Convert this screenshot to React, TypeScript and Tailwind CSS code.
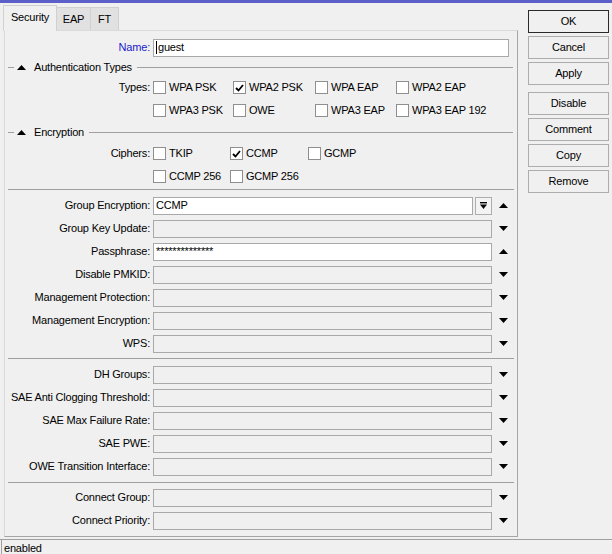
import React from 'react';

type Field = { label: string; value?: string; white?: boolean; arrow: 'up' | 'down'; drop?: boolean };

const GROUP_A: Field[] = [
  { label: 'Group Encryption:', value: 'CCMP', white: true, arrow: 'up', drop: true },
  { label: 'Group Key Update:', arrow: 'down' },
  { label: 'Passphrase:', value: '**************', white: true, arrow: 'up' },
  { label: 'Disable PMKID:', arrow: 'down' },
  { label: 'Management Protection:', arrow: 'down' },
  { label: 'Management Encryption:', arrow: 'down' },
  { label: 'WPS:', arrow: 'down' },
];

const GROUP_B: Field[] = [
  { label: 'DH Groups:', arrow: 'down' },
  { label: 'SAE Anti Clogging Threshold:', arrow: 'down' },
  { label: 'SAE Max Failure Rate:', arrow: 'down' },
  { label: 'SAE PWE:', arrow: 'down' },
  { label: 'OWE Transition Interface:', arrow: 'down' },
];

const GROUP_C: Field[] = [
  { label: 'Connect Group:', arrow: 'down' },
  { label: 'Connect Priority:', arrow: 'down' },
];

const BUTTONS = ['OK', 'Cancel', 'Apply', 'Disable', 'Comment', 'Copy', 'Remove'];

function Tri({ dir }: { dir: 'up' | 'down' }) {
  return (
    <svg width="9" height="5" viewBox="0 0 9 5" className="block">
      {dir === 'up' ? <polygon points="4.5,0 9,5 0,5" fill="#000" /> : <polygon points="0,0 9,0 4.5,5" fill="#000" />}
    </svg>
  );
}

function Check({ label, checked, w }: { label: string; checked?: boolean; w: string }) {
  return (
    <div className={`flex items-center ${w}`}>
      <div className="flex h-[13px] w-[13px] shrink-0 items-center justify-center border border-[#8f8f8f] bg-white">
        {checked && (
          <svg width="9" height="8" viewBox="0 0 9 8">
            <polyline points="1,4 3.5,6.5 8,1" fill="none" stroke="#000" strokeWidth="1.8" />
          </svg>
        )}
      </div>
      <span className="ml-[3px] whitespace-nowrap">{label}</span>
    </div>
  );
}

function Section({ title }: { title: string }) {
  return (
    <div className="flex h-[17px] items-center pl-[3px] pr-[4px]">
      <div className="h-px w-[6px] bg-[#a0a0a0]" />
      <div className="ml-[3px]">
        <Tri dir="up" />
      </div>
      <span className="ml-[8px] whitespace-nowrap">{title}</span>
      <div className="ml-[5px] h-px flex-1 bg-[#a0a0a0]" />
    </div>
  );
}

function Row({ f }: { f: Field }) {
  return (
    <div className="flex h-[23px] items-center">
      <div className="w-[145px] whitespace-nowrap text-right">{f.label}</div>
      <div className="ml-[3px] flex w-[339px] items-center">
        <div
          className={`flex h-[18px] flex-1 items-center border border-[#a9a9a9] pl-[2px] ${f.white ? 'bg-white' : 'bg-[#f0f0f0]'}`}
        >
          {f.value}
        </div>
        {f.drop && (
          <div className="ml-[2px] flex h-[18px] w-[17px] items-center justify-center border border-[#adadad] bg-[#f3f3f3]">
            <svg width="7" height="7" viewBox="0 0 7 7">
              <rect x="0" y="0" width="7" height="1.4" fill="#000" />
              <polygon points="0,2.5 7,2.5 3.5,7" fill="#000" />
            </svg>
          </div>
        )}
      </div>
      <div className="ml-[7px]">
        <Tri dir={f.arrow} />
      </div>
    </div>
  );
}

function Sep({ mt }: { mt: string }) {
  return <div className={`${mt} mx-[3px] h-px bg-[#a0a0a0]`} />;
}

export default function App() {
  return (
    <div
      className="relative flex h-[554px] w-[612px] flex-col overflow-hidden bg-[#f0f0f0] text-[11px] tracking-[-0.2px] text-black"
      style={{ fontFamily: '"Liberation Sans", Arial, sans-serif' }}
    >
      <div className="h-[3px] bg-[#5b5fc7]" />
      <div className="flex flex-1">
        {/* left: tabs + panel */}
        <div className="ml-[3px] flex w-[515px] flex-col">
          <div className="mt-[2px] flex h-[25px] items-end">
            <div className="z-10 -mb-px flex h-[26px] w-[54px] items-center justify-center border border-b-0 border-[#d0d0d0] bg-[#f0f0f0] pb-[2px]">
              Security
            </div>
            <div className="flex h-[23px] w-[34px] items-center justify-center border border-l-0 border-b-0 border-[#d0d0d0] bg-[#e1e1e1]">
              EAP
            </div>
            <div className="flex h-[23px] w-[28px] items-center justify-center border border-l-0 border-b-0 border-[#d0d0d0] bg-[#e1e1e1]">
              FT
            </div>
          </div>
          <div className="ml-px flex h-[507px] flex-col border border-t-[#dadada] border-l-[#dadada] border-r-[#a6a6a6] border-b-[#a6a6a6] pt-[5px]">
            <div className="flex h-[23px] items-center">
              <div className="w-[145px] text-right text-[#1b1bcf]">Name:</div>
              <div className="ml-[3px] flex h-[18px] w-[356px] items-center border border-[#a9a9a9] bg-white pl-[2px]">
                <span className="mr-px h-[13px] w-px bg-black" />
                guest
              </div>
            </div>
            <Section title="Authentication Types" />
            <div className="flex h-[23px] items-center">
              <div className="w-[145px] text-right">Types:</div>
              <div className="ml-[3px] flex">
                <Check label="WPA PSK" w="w-[80px]" />
                <Check label="WPA2 PSK" checked w="w-[82px]" />
                <Check label="WPA EAP" w="w-[81px]" />
                <Check label="WPA2 EAP" w="w-[90px]" />
              </div>
            </div>
            <div className="flex h-[23px] items-center">
              <div className="ml-[148px] flex">
                <Check label="WPA3 PSK" w="w-[80px]" />
                <Check label="OWE" w="w-[82px]" />
                <Check label="WPA3 EAP" w="w-[81px]" />
                <Check label="WPA3 EAP 192" w="w-[100px]" />
              </div>
            </div>
            <div className="flex h-[20px] flex-col justify-center">
              <Section title="Encryption" />
            </div>
            <div className="flex h-[23px] items-center">
              <div className="w-[145px] text-right">Ciphers:</div>
              <div className="ml-[3px] flex">
                <Check label="TKIP" w="w-[77px]" />
                <Check label="CCMP" checked w="w-[78px]" />
                <Check label="GCMP" w="w-[60px]" />
              </div>
            </div>
            <div className="flex h-[23px] items-center">
              <div className="ml-[148px] flex">
                <Check label="CCMP 256" w="w-[77px]" />
                <Check label="GCMP 256" w="w-[78px]" />
              </div>
            </div>
            <Sep mt="mt-[1px]" />
            <div className="pt-[4px]">
              {GROUP_A.map((f) => (
                <Row key={f.label} f={f} />
              ))}
            </div>
            <Sep mt="mt-[3px]" />
            <div className="pt-[4px]">
              {GROUP_B.map((f) => (
                <Row key={f.label} f={f} />
              ))}
            </div>
            <Sep mt="mt-[4px]" />
            <div className="pt-[3px]">
              {GROUP_C.map((f) => (
                <Row key={f.label} f={f} />
              ))}
            </div>
          </div>
        </div>

        {/* right: buttons */}
        <div className="ml-[10px] mt-[7px] flex w-[81px] flex-col">
          {BUTTONS.map((b, i) => (
            <div
              key={b}
              className={`flex h-[23px] items-center justify-center border bg-[#f0f0f0] ${
                i === 0 ? 'border-[#2a2a2a]' : 'border-[#adadad]'
              } ${i === 0 ? '' : i === 3 ? 'mt-[7px]' : 'mt-[3px]'}`}
            >
              {b}
            </div>
          ))}
        </div>
      </div>

      {/* status bar */}
      <div className="flex h-[15px] border-t border-[#a0a0a0]">
        <div className="ml-[1px] flex items-center border-l border-[#a0a0a0] pl-[2px] pt-[2px]">enabled</div>
      </div>
    </div>
  );
}
